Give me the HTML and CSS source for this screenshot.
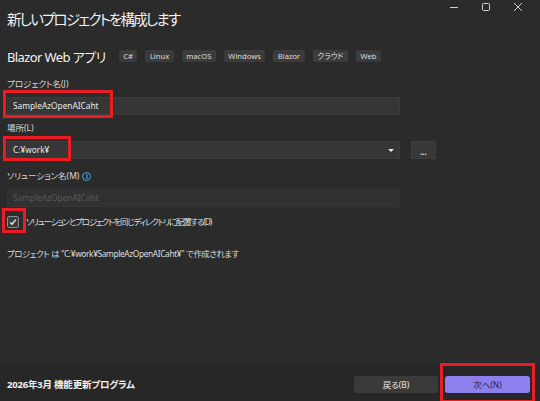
FILE: index.html
```html
<!DOCTYPE html>
<html lang="ja">
<head>
<meta charset="utf-8">
<title>新しいプロジェクトを構成します</title>
<link rel="stylesheet" href="styles.css">
</head>
<body>
<div class="window">
  <header class="titlebar">
    <h1 class="title">新しいプロジェクトを構成します</h1>
    <div class="controls">
      <span class="ctl"><svg width="10" height="10" viewBox="0 0 10 10"><path d="M1 5.5h8" stroke="#cfcfcf" stroke-width="1"/></svg></span>
      <span class="ctl"><svg width="10" height="10" viewBox="0 0 10 10"><rect x="1.5" y="1.5" width="7" height="7" rx="1" fill="none" stroke="#cfcfcf" stroke-width="1"/></svg></span>
      <span class="ctl"><svg width="10" height="10" viewBox="0 0 10 10"><path d="M1 1l8 8M9 1l-8 8" stroke="#cfcfcf" stroke-width="1"/></svg></span>
    </div>
  </header>

  <main class="content">
    <div class="template-row">
      <span class="template-name">Blazor Web アプリ</span>
      <div class="tags">
        <span class="tag">C#</span>
        <span class="tag">Linux</span>
        <span class="tag">macOS</span>
        <span class="tag">Windows</span>
        <span class="tag">Blazor</span>
        <span class="tag">クラウド</span>
        <span class="tag">Web</span>
      </div>
    </div>

    <div class="field f1">
      <label class="label">プロジェクト名(J)</label>
      <div class="input">SampleAzOpenAICaht</div>
    </div>

    <div class="field f2">
      <label class="label">場所(L)</label>
      <div class="input-row">
        <div class="input select">C:¥work¥<span class="arrow"></span></div>
        <button class="browse">...</button>
      </div>
    </div>

    <div class="field f3">
      <label class="label">ソリューション名(M) <span class="info">i</span></label>
      <div class="input disabled">SampleAzOpenAICaht</div>
    </div>

    <div class="check-row">
      <span class="checkbox"><svg width="8" height="8" viewBox="0 0 8 8"><path d="M1.2 4.4l1.8 1.8 3.8-4.6" fill="none" stroke="#f2f2f2" stroke-width="1.3"/></svg></span>
      <span class="check-label">ソリューションとプロジェクトを同じディレクトリに配置する(D)</span>
    </div>

    <p class="path-info">プロジェクト は "C:¥work¥SampleAzOpenAICaht¥" で作成されます</p>
  </main>

  <footer class="footer">
    <span class="version">2026年3月 機能更新プログラム</span>
    <div class="buttons">
      <button class="btn back">戻る(B)</button>
      <button class="btn next">次へ(N)</button>
    </div>
  </footer>

  <div class="mark m1"></div>
  <div class="mark m2"></div>
  <div class="mark m3"></div>
  <div class="mark m4"></div>
</div>
</body>
</html>
```

FILE: styles.css
```css
* { box-sizing: border-box; }
html, body { margin: 0; padding: 0; }
body {
  width: 540px;
  height: 401px;
  background: #2b2b2b;
  font-family: "Noto Sans", "Noto Sans CJK JP", sans-serif;
  font-feature-settings: "palt";
  color: #e6e6e6;
  overflow: hidden;
}
.window {
  position: relative;
  width: 540px;
  height: 401px;
  display: flex;
  flex-direction: column;
}
.titlebar {
  display: flex;
  justify-content: space-between;
  align-items: flex-start;
  height: 38px;
}
.title {
  margin: 0;
  padding: 9px 0 0 7px;
  font-size: 14.5px;
  line-height: 20px;
  font-weight: 400;
  color: #f2f2f2;
  font-family: "Noto Sans CJK JP", sans-serif;
  letter-spacing: -1.8px;
}
.controls {
  display: flex;
  padding-right: 6px;
}
.ctl {
  width: 32px;
  height: 14px;
  display: flex;
  align-items: center;
  justify-content: center;
}
.content {
  flex: 1;
  padding: 0 0 0 7px;
}
.template-row {
  display: flex;
  align-items: center;
  height: 16px;
  margin-top: 10px;
}
.template-name {
  font-size: 13px;
  color: #f2f2f2;
  margin-right: 13px;
  letter-spacing: -0.6px;
}
.tags {
  display: flex;
  gap: 8px;
}
.tag {
  height: 12px;
  padding: 0 4.5px;
  background: #3b3b3b;
  border-radius: 2px;
  font-size: 7.6px;
  line-height: 12px;
  color: #dcdcdc;
}
.field { display: flex; flex-direction: column; }
.f1 { margin-top: 14px; }
.f2 { margin-top: 7px; }
.f3 { margin-top: 11px; }
.label {
  height: 12px;
  font-size: 8.5px;
  line-height: 12px;
  color: #d8d8d8;
  margin-bottom: 7px;
  display: flex;
  align-items: center;
  gap: 3px;
}
.info {
  width: 9px;
  height: 9px;
  border: 1px solid #4aa8dc;
  border-radius: 50%;
  color: #4aa8dc;
  font-size: 6.5px;
  line-height: 7px;
  text-align: center;
  font-weight: 700;
  font-family: "Noto Sans", sans-serif;
}
.input {
  width: 393px;
  height: 18px;
  background: #363636;
  border: 1px solid #3c3c3c;
  font-size: 8.3px;
  line-height: 16px;
  padding-left: 5px;
  color: #e8e8e8;
}
.input-row {
  display: flex;
  gap: 11px;
}
.select {
  position: relative;
}
.arrow {
  position: absolute;
  right: 5px;
  top: 7px;
  width: 0;
  height: 0;
  border-left: 3px solid transparent;
  border-right: 3px solid transparent;
  border-top: 3px solid #e8e8e8;
}
.browse {
  width: 25px;
  height: 18px;
  background: #383838;
  border: 1px solid #3e3e3e;
  color: #e0e0e0;
  font-size: 8px;
  line-height: 12px;
  padding: 4px 0 0;
  font-family: "Noto Sans", sans-serif;
  font-weight: 700;
}
.disabled {
  background: #313131;
  border-color: #353535;
  color: #5a5a5a;
}
.check-row {
  display: flex;
  align-items: center;
  height: 13px;
  margin-top: 8px;
}
.checkbox {
  width: 12px;
  height: 12px;
  border: 1px solid #8c8c8c;
  background: #3d3d3d;
  border-radius: 2px;
  display: flex;
  align-items: center;
  justify-content: center;
  margin-right: 7px;
}
.check-label {
  font-size: 8.5px;
  color: #dedede;
  line-height: 12px;
  letter-spacing: -1.2px;
}
.path-info {
  margin: 20px 0 0;
  font-size: 8.3px;
  line-height: 12px;
  color: #dedede;
  letter-spacing: -0.35px;
}
.footer {
  height: 36px;
  background: #272727;
  display: flex;
  align-items: center;
  justify-content: space-between;
  padding: 2px 10px 0 7px;
}
.version {
  font-size: 9.5px;
  font-weight: 700;
  color: #f2f2f2;
  letter-spacing: -0.2px;
}
.buttons {
  display: flex;
  gap: 7px;
}
.btn {
  height: 17px;
  border: none;
  border-radius: 3px;
  font-size: 8.5px;
  font-family: "Noto Sans", "Noto Sans CJK JP", sans-serif;
  font-feature-settings: "palt";
  padding: 0;
  line-height: 17px;
}
.back {
  width: 84px;
  background: #3a3a3a;
  color: #e6e6e6;
}
.next {
  width: 85px;
  background: #8d80ee;
  color: #24243a;
}
.mark {
  position: absolute;
  border: 3px solid #ec1c24;
}
.m1 { left: 3px; top: 90px; width: 110px; height: 28px; }
.m2 { left: 3px; top: 136px; width: 68px; height: 25px; }
.m3 { left: 2px; top: 208px; width: 24px; height: 25px; }
.m4 { left: 440px; top: 363px; width: 95px; height: 40px; }
```
